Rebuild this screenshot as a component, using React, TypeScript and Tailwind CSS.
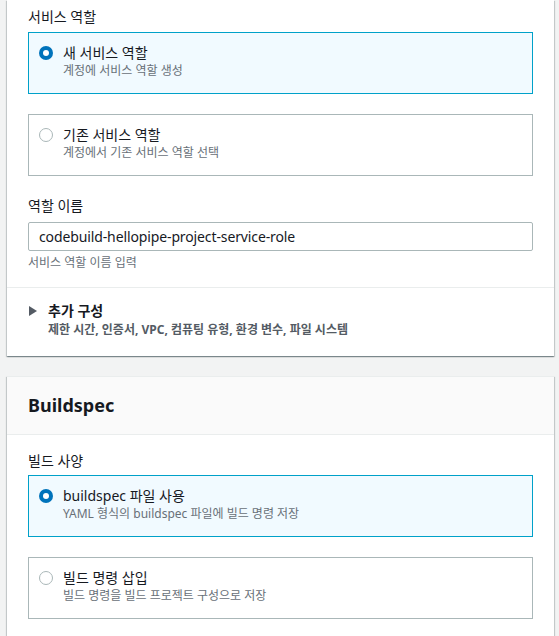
import React from "react";

const font = { fontFamily: '"Noto Sans", "Noto Sans CJK KR", sans-serif' };

function Radio({ checked }: { checked: boolean }) {
  return checked ? (
    <span className="flex h-[14px] w-[14px] shrink-0 items-center justify-center rounded-full bg-[#0073bb]">
      <span className="h-[6px] w-[6px] rounded-full bg-white" />
    </span>
  ) : (
    <span className="h-[14px] w-[14px] shrink-0 rounded-full border border-[#aab7b8] bg-white" />
  );
}

function Tile({ checked, title, desc }: { checked: boolean; title: string; desc: string }) {
  return (
    <div
      className={
        checked
          ? "flex items-start border border-[#00a1c9] bg-[#f1faff] pl-[10px] pr-[10px] pt-[10px] pb-[14px]"
          : "flex items-start border border-[#aab7b8] bg-white pl-[10px] pr-[10px] pt-[10px] pb-[14px]"
      }
    >
      <div className="flex h-[20px] items-center">
        <Radio checked={checked} />
      </div>
      <div className="ml-[10px] flex flex-col">
        <span className="text-[14px] leading-[20px] text-[#16191f]">{title}</span>
        <span className="text-[12px] leading-[16px] text-[#687078]">{desc}</span>
      </div>
    </div>
  );
}

export default function App() {
  return (
    <div className="min-h-screen bg-[#f2f3f3] pl-[7px] pr-[5px]" style={font}>
      {/* Card 1 */}
      <div className="bg-white shadow-[0_1px_1px_0_rgba(0,28,36,0.3),1px_1px_1px_0_rgba(0,28,36,0.15),-1px_1px_1px_0_rgba(0,28,36,0.15)]">
        <div className="px-[21px] pt-[6px] pb-[16px]">
          <div className="text-[14px] leading-[22px] text-[#16191f]">서비스 역할</div>
          <div className="mt-[4px] flex flex-col gap-[20px]">
            <Tile checked title="새 서비스 역할" desc="계정에 서비스 역할 생성" />
            <Tile checked={false} title="기존 서비스 역할" desc="계정에서 기존 서비스 역할 선택" />
          </div>
          <div className="mt-[19px] text-[14px] leading-[22px] text-[#16191f]">역할 이름</div>
          <div className="mt-[5px] flex h-[29px] items-center rounded-[2px] border border-[#aab7b8] bg-white px-[10px] text-[14px] tracking-[-0.12px] text-[#16191f]">
            codebuild-hellopipe-project-service-role
          </div>
          <div className="mt-[4px] text-[12px] leading-[16px] text-[#687078]">서비스 역할 이름 입력</div>
        </div>
        <div className="border-t border-[#eaeded] px-[21px] pt-[13px] pb-[17px]">
          <div className="flex items-center">
            <svg width="8" height="10" viewBox="0 0 8 10" className="ml-[1px]">
              <polygon points="0,0 8,5 0,10" fill="#545b64" />
            </svg>
            <span className="ml-[11px] text-[14px] font-bold leading-[20px] text-[#16191f]">추가 구성</span>
          </div>
          <div className="pl-[20px] text-[12px] font-bold leading-[18px] text-[#545b64]">
            제한 시간, 인증서, VPC, 컴퓨팅 유형, 환경 변수, 파일 시스템
          </div>
        </div>
      </div>

      {/* Card 2 */}
      <div className="mt-[20px] bg-white shadow-[0_1px_1px_0_rgba(0,28,36,0.3),1px_1px_1px_0_rgba(0,28,36,0.15),-1px_1px_1px_0_rgba(0,28,36,0.15)]">
        <div className="border-t border-b border-[#eaeded] bg-[#fafafa] px-[21px] pt-[17px] pb-[18px]">
          <h2 className="text-[18px] font-bold leading-[22px] text-[#16191f]">Buildspec</h2>
        </div>
        <div className="px-[21px] pt-[15px] pb-[20px]">
          <div className="text-[14px] leading-[22px] text-[#16191f]">빌드 사양</div>
          <div className="mt-[3px] flex flex-col gap-[20px]">
            <Tile checked title="buildspec 파일 사용" desc="YAML 형식의 buildspec 파일에 빌드 명령 저장" />
            <Tile checked={false} title="빌드 명령 삽입" desc="빌드 명령을 빌드 프로젝트 구성으로 저장" />
          </div>
        </div>
      </div>
    </div>
  );
}
